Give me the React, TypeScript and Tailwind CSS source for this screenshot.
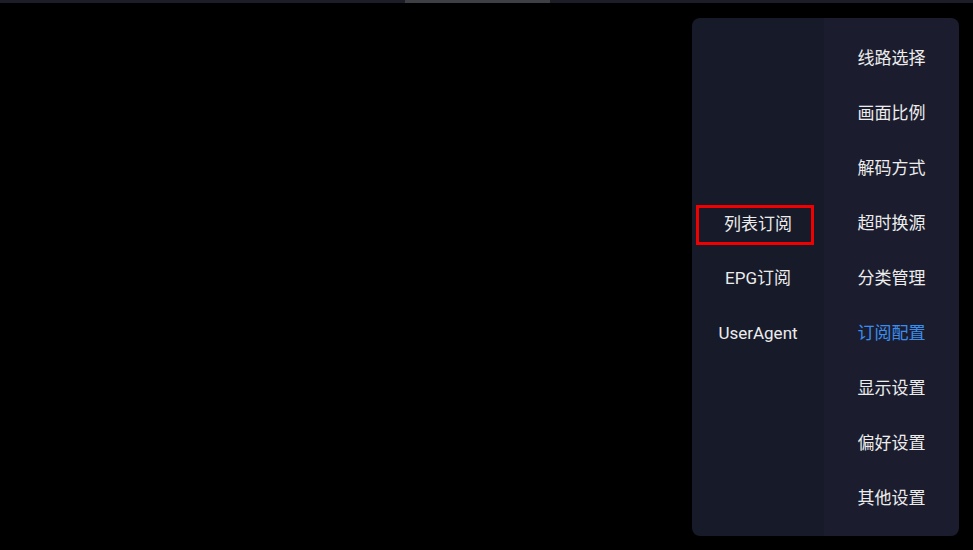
import React from 'react'

const mainItems = ['线路选择', '画面比例', '解码方式', '超时换源', '分类管理', '订阅配置', '显示设置', '偏好设置', '其他设置']
const subItems = ['列表订阅', 'EPG订阅', 'UserAgent']

const App = () => {
  const active = '订阅配置'
  const focused = '列表订阅'
  return (
    <div
      className="w-[973px] h-[550px] bg-black flex flex-col overflow-hidden"
      style={{ fontFamily: 'Roboto, "Noto Sans CJK SC", sans-serif' }}
    >
      <div className="h-[3px] flex bg-[#1c1d26]">
        <div className="w-[405px]" />
        <div className="w-[145px] bg-[#3e3f44]" />
      </div>
      <div className="flex justify-end pt-[15px] pr-[14px]">
        <div className="w-[267px] h-[518px] rounded-[8px] overflow-hidden flex">
          <div className="w-[132px] bg-[#171a29] flex flex-col justify-center pt-[13px] pb-[10px]">
            {subItems.map((item) => (
              <div key={item} className="h-[55px] flex items-center pl-[4px] pr-[10px]">
                <div
                  className={`w-full h-[40px] flex items-center justify-center text-[17px] text-[#ececec] pl-[6px] ${
                    item === focused ? 'border-[3px] border-[#f00000] mt-[3px]' : ''
                  }`}
                >
                  {item}
                </div>
              </div>
            ))}
          </div>
          <div className="flex-1 bg-[#1b1d2e] flex flex-col justify-center pt-[13px] pb-[10px]">
            {mainItems.map((item) => (
              <div
                key={item}
                className={`h-[55px] flex items-center justify-center text-[17px] ${
                  item === active ? 'text-[#3b8ded]' : 'text-[#ececec]'
                }`}
              >
                {item}
              </div>
            ))}
          </div>
        </div>
      </div>
    </div>
  )
}

export default App
